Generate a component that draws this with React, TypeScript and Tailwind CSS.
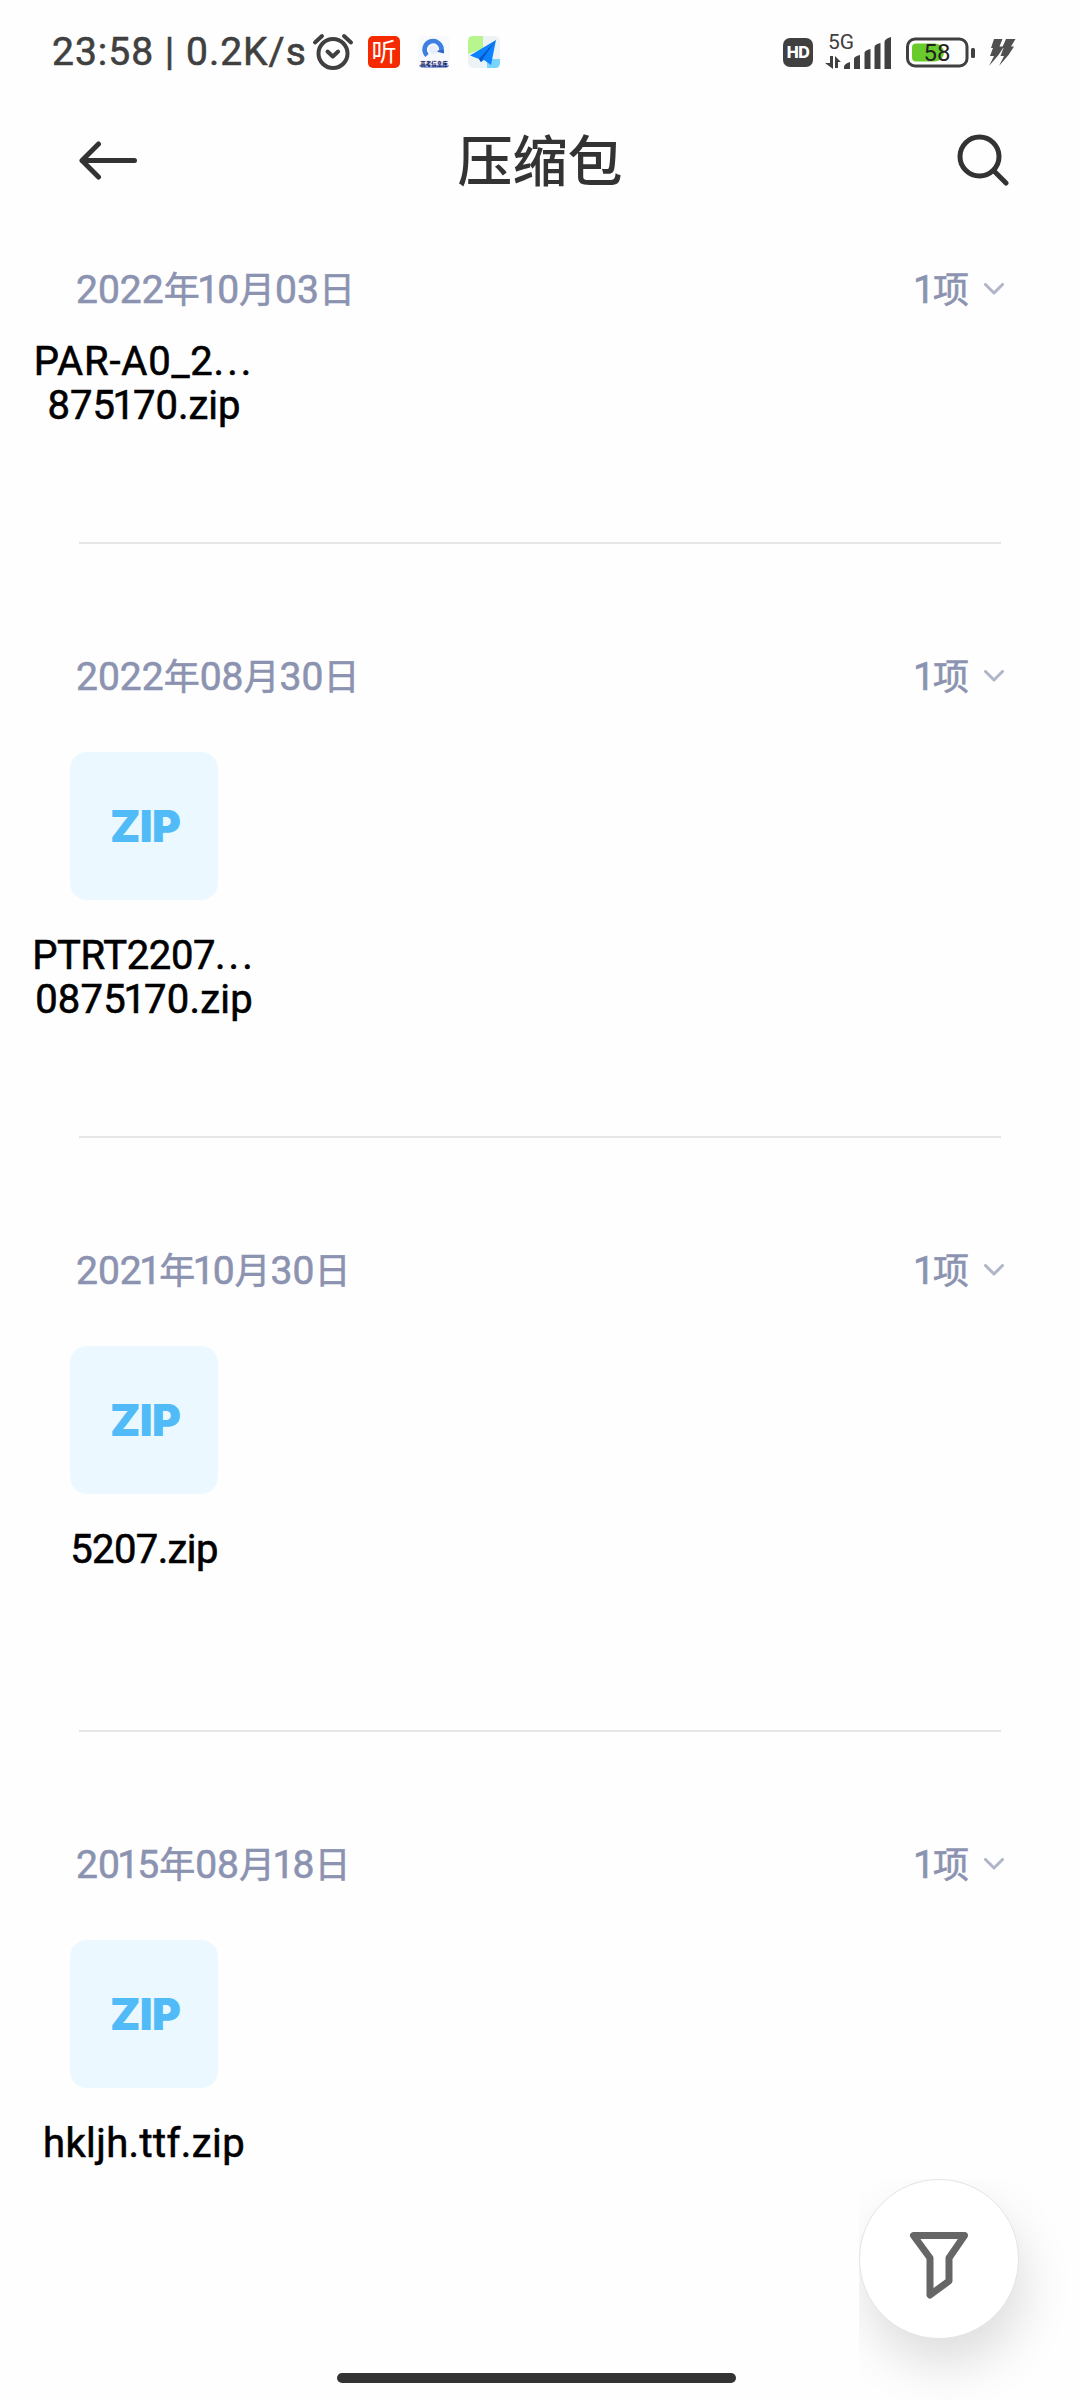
import { clsx } from "clsx";

const files = [
    { date: "2022年10月03日", name: ["PAR-A0_2...", "875170.zip"], nameClass: ["tracking-[0.8px]", "tracking-[0px]"], preview: false },
    { date: "2022年08月30日", name: ["PTRT2207...", "0875170.zip"], nameClass: ["tracking-[-0.4px]", "tracking-[0.2px]"], preview: true },
    { date: "2021年10月30日", name: ["5207.zip"], nameClass: ["tracking-[-0.6px]"], preview: true },
    { date: "2015年08月18日", name: ["hkljh.ttf.zip"], nameClass: ["tracking-[0.4px]"], preview: true },
];

// narrow "1", smaller hanzi, wide ellipsis
function Label({ text, className }: { text: string; className?: string }) {
    return (
        <span className={clsx("whitespace-nowrap [-webkit-text-stroke:0.6px]", className)}>
            {text.split(/(1|年|月|日|项|\.\.\.)/).map((part, i) => {
                if (part === "1") return <span key={i} className="-ml-[2.5px] -mr-[2px]">1</span>;
                if (part === "...") return <span key={i} className="tracking-[3px]">...</span>;
                if (/^[年月日项]$/.test(part)) return <span key={i} className="text-[36px]">{part}</span>;
                return part;
            })}
        </span>
    );
}

function StatusBar() {
    return (
        <div className="flex h-[104px] items-center pl-[52px] text-[#404040]">
            <span className="w-[260px] whitespace-nowrap text-[39px] leading-none tracking-[1px] [-webkit-text-stroke:0.6px]">23:58 | 0.2K/s</span>
            <svg className="h-[38px] w-[42px] shrink-0" viewBox="0 0 42 38" fill="none" stroke="currentColor" strokeWidth="4" strokeLinecap="round" strokeLinejoin="round">
                <circle cx="21" cy="20.5" r="14.5" />
                <path d="M15.5 18.5l5.3 5 5.3-5M3 9.500l7-6.500M32 3l7 6.500" />
            </svg>
            <div className="ml-[14px] flex h-8 w-8 items-center justify-center rounded-[5px] bg-[#f62a00] text-[25px] leading-none text-white">听</div>
            <svg className="ml-[18px] size-8" viewBox="0 0 32 32">
                <rect width="32" height="32" rx="5" fill="#f8f9fc" />
                <path d="M9 19.500A8.500 8.500 0 1 1 23.500 14.500" fill="none" stroke="#3d7fe0" strokeWidth="4.500" />
                <path d="M16 15l10 2.500v-4z" fill="#2e66cc" />
                <circle cx="15.500" cy="13.500" r="4.500" fill="#e8effb" />
                <path d="M1 29h30v1q-1 2-4 2H6q-3 0-5-2z" fill="#8ea6dd" />
                <text x="16" y="29.500" fontSize="5.500" fontWeight="900" textAnchor="middle" fill="#1d2a6e">高考信息库</text>
            </svg>
            <svg className="ml-[18px] size-8" viewBox="0 0 32 32">
                <rect width="32" height="32" rx="5" fill="#edf3f4" />
                <path d="M5 0h10v13L0 18V5q0-5 5-5z" fill="#b9f58f" />
                <path d="M19 23h13v4q0 5-5 5h-8z" fill="#79d4fb" />
                <path d="M28 4L2 19.500l9 3.500 2 3 3-2 7 5z" fill="#0c82ff" />
                <path d="M28 4L11 23l2 3 2-3.500z" fill="#0757c8" />
            </svg>
            <div className="ml-[283px] flex h-[29px] w-[30px] items-center justify-center rounded-[7px] bg-[#404040] font-[Inter] text-[16px] font-extrabold leading-none tracking-[-0.5px] text-white">HD</div>
            <svg className="ml-[12px] h-[38px] w-[68px] overflow-visible" viewBox="0 0 68 38" fill="currentColor">
                <text x="3" y="16" fontSize="21" textLength="26">5G</text>
                <path d="M5 23h3v13L0 30h5zM10 23l6 6h-3v6h-3zM19 34q0-3 6-5v7h-6zM29 26q0-2.500 6-4v14h-6zM39.500 20q0-2.500 6-4v20h-6zM49.500 14q0-2.500 6-4v26h-6zM59.500 9q0-3 6.500-5v32h-6.500z" />
            </svg>
            <svg className="ml-[13px] h-[31px] w-[70px]" viewBox="0 0 70 31">
                <rect x="1.500" y="2" width="59.500" height="27" rx="7.500" fill="none" stroke="currentColor" strokeWidth="3" />
                <path d="M10 6.500h19a9 9 0 0 1 0 18H10q-4 0-4-4v-10q0-4 4-4z" fill="#68cb2b" />
                <text x="31" y="24" fontSize="24" textAnchor="middle" fill="#222">58</text>
                <rect x="65" y="11" width="4" height="10" rx="1.500" fill="currentColor" />
            </svg>
            <svg className="ml-[12px] h-[29px] w-[28px]" viewBox="0 0 28 29" fill="#505050">
                <path d="M6 1h8.500l-3 7.500H16L10.500 17 1 28l5-10H2l3-8H3z" />
                <path d="M18 1h9.500l-4.500 7.500H26L20.500 17 11 28l5-10h-3.500l3-8H14z" />
            </svg>
        </div>
    );
}

function TopBar() {
    return (
        <header className="flex h-28 items-center justify-between pl-[78px] pr-[71px] text-[#333333]">
            <svg className="h-10 w-[59px]" viewBox="0 0 59 40" fill="none" stroke="currentColor" strokeWidth="5" strokeLinecap="round" strokeLinejoin="round">
                <path d="M56.500 20.500H4M20.500 4L4 20.500l16.500 16.500" />
            </svg>
            <h1 className="mr-[14px] mt-1 text-[55px] font-medium leading-none">压缩包</h1>
            <svg className="h-[52px] w-[52px]" viewBox="0 0 52 52" fill="none" stroke="currentColor" strokeWidth="5" strokeLinecap="round">
                <circle cx="22.500" cy="22.500" r="19.500" />
                <path d="M37 37l12 12" />
            </svg>
        </header>
    );
}

function ZipTile() {
    return (
        <div className="mb-[33px] flex h-[148px] w-[148px] items-center justify-center rounded-[17px] bg-[#ecf8ff]">
            <span className="ml-[2px] font-[Inter] text-[44px] font-black leading-none tracking-[-0.7px] text-[#51bbf8]">ZIP</span>
        </div>
    );
}

export default function App() {
    return (
        <div className="relative h-[2400px] w-[1080px] overflow-hidden bg-[#fefefe] font-['Roboto','Noto_Sans_CJK_SC',sans-serif]">
            <StatusBar />
            <TopBar />
            <main>
                {files.map((file) => (
                    <section key={file.date} className="group">
                        <div className={clsx("flex h-[60px] items-center justify-between pl-[76px] pr-[76px] text-[39px] leading-[58px] text-[#8c93b1]", file.preview ? "mt-[102px]" : "mt-[43px]")}>
                            <Label text={file.date} className="pt-[2px]" />
                            <span className="flex items-center">
                                <Label text="1项" className="pt-[2px]" />
                                <svg className="ml-[15px] h-3 w-5" viewBox="0 0 20 12" fill="none" stroke="#b0b5ca" strokeWidth="3" strokeLinecap="round" strokeLinejoin="round">
                                    <path d="M1.500 1.500L10 10l8.500-8.500" />
                                </svg>
                            </span>
                        </div>
                        <div className={clsx("flex w-72 flex-col items-center", file.preview ? "mt-[46px]" : "mt-5")}>
                            {file.preview && <ZipTile />}
                            <div className="flex h-[203px] flex-col items-center pt-px text-[40px] leading-[44px] text-black">
                                {file.name.map((line, i) => (
                                    <Label key={line} text={line} className={file.nameClass[i]} />
                                ))}
                            </div>
                        </div>
                        <div className="mx-[79px] h-[2px] bg-[#e6e6e6] group-last:hidden" />
                    </section>
                ))}
            </main>
            {/* floating filter button, its shadow is cut at the top left */}
            <div className="absolute bottom-0 right-0 h-[221px] w-[221px] overflow-hidden">
                <div className="flex h-[160px] w-[160px] items-center justify-center rounded-full border border-[#e4e4e4] bg-white shadow-[6px_26px_50px_rgba(0,0,0,0.13)]">
                    <svg className="mt-[12px] h-[69px] w-[60px]" viewBox="0 0 60 69" fill="none" stroke="#666666" strokeWidth="7" strokeLinejoin="round">
                        <path d="M4.500 4.500h51L40 27v23L21 64V27z" />
                    </svg>
                </div>
            </div>
            <div className="absolute bottom-[17px] left-[337px] h-[10px] w-[399px] rounded-full bg-[#333333]" />
        </div>
    );
}
